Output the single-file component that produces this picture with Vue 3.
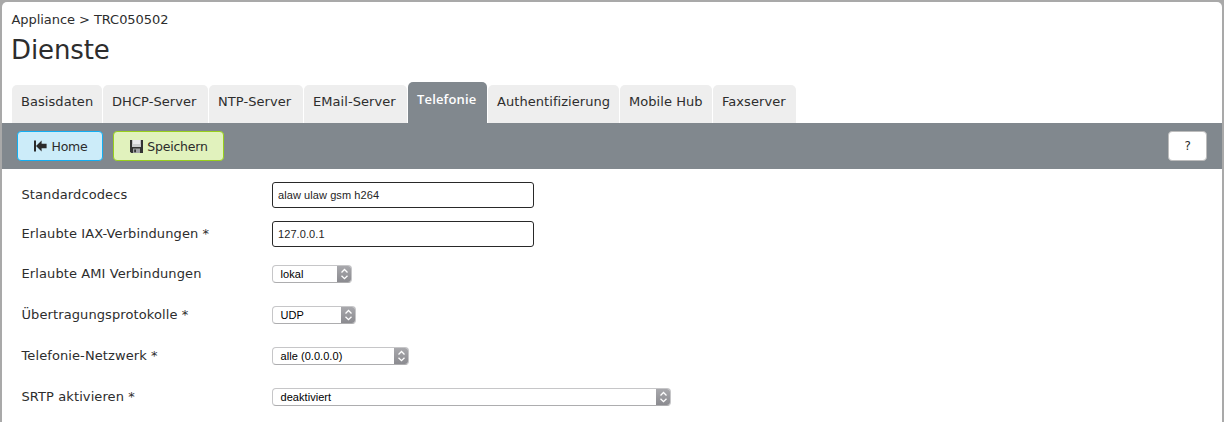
<script setup>
const tabs = [
  { name: 'Basisdaten', width: 90 },
  { name: 'DHCP-Server', width: 105 },
  { name: 'NTP-Server', width: 94 },
  { name: 'EMail-Server', width: 103 },
  { name: 'Telefonie', width: 79, active: true },
  { name: 'Authentifizierung', width: 131 },
  { name: 'Mobile Hub', width: 92 },
  { name: 'Faxserver', width: 83 },
]
const fields = [
  { label: 'Standardcodecs', type: 'input', value: 'alaw ulaw gsm h264', width: 262 },
  { label: 'Erlaubte IAX-Verbindungen *', type: 'input', value: '127.0.0.1', width: 262 },
  { label: 'Erlaubte AMI Verbindungen', type: 'select', value: 'lokal', width: 80 },
  { label: 'Übertragungsprotokolle *', type: 'select', value: 'UDP', width: 84 },
  { label: 'Telefonie-Netzwerk *', type: 'select', value: 'alle (0.0.0.0)', width: 137 },
  { label: 'SRTP aktivieren *', type: 'select', value: 'deaktiviert', width: 399 },
]
</script>

<template>
  <div class="frame">
    <main class="panel">
      <div class="crumb">Appliance &gt; TRC050502</div>
      <h1>Dienste</h1>
      <nav class="tabs">
        <a v-for="t in tabs" :key="t.name" class="tab" :class="{ active: t.active }" :style="{ width: t.width + 'px' }">{{ t.name }}</a>
      </nav>
      <div class="toolbar">
        <button class="btn home">
          <svg width="13" height="12" viewBox="0 0 13 12"><path d="M0 .5h2v11H0zM2 6l5.6-5.4v3.2H12.6v4.4H7.6v3.2z" fill="#2b2b2b" /></svg>
          <span>Home</span>
        </button>
        <button class="btn save">
          <svg width="13" height="13" viewBox="0 0 13 13">
            <path d="M0 0h13v13H1.2L0 11.8z" fill="#333" />
            <path d="M2.2 0h8.6v7H2.2z" fill="#e9e9ec" />
            <path d="M2.2 4h8.6v3H2.2z" fill="#cbcccf" />
            <path d="M3 8.6h7V13H3z" fill="#a2a3a6" />
            <path d="M4.2 9.4h1.8V12.2H4.2z" fill="#333" />
          </svg>
          <span>Speichern</span>
        </button>
        <button class="btn help">?</button>
      </div>
      <form class="form">
        <div v-for="f in fields" :key="f.label" class="row" :class="{ compact: f.type === 'input' }">
          <label>{{ f.label }}</label>
          <input v-if="f.type === 'input'" class="text" :value="f.value" :style="{ width: f.width + 'px' }" />
          <div v-else class="select" :style="{ width: f.width + 'px' }">
            <span class="value">{{ f.value }}</span>
            <span class="arrows">
              <svg width="15" height="18" viewBox="0 0 15 18"><path d="M4.5 7.5l3-3 3 3M4.5 10.7l3 3 3-3" fill="none" stroke="#fff" stroke-width="1.3" /></svg>
            </span>
          </div>
        </div>
      </form>
    </main>
  </div>
</template>

<style>
body { margin: 0; background: #aaa; overflow: hidden; }
</style>

<style scoped>
* { box-sizing: border-box; }
.frame {
  height: 422px; padding: 2px 2px 0; background: #a9a9a9; overflow: hidden;
  font-family: Verdana, "DejaVu Sans", sans-serif; font-size: 13px; color: #2d2d2d;
}
.panel { height: 440px; background: #fff; border-radius: 5px 5px 0 0; overflow: hidden; }
.crumb { height: 30px; padding: 9px 0 0 9.5px; line-height: 18px; letter-spacing: -.06px; }
h1 { margin: 0; height: 48px; padding: 2px 0 0 9px; font-size: 26px; font-weight: 400; line-height: 32px; letter-spacing: -.1px; }
.tabs { height: 43px; padding-left: 10px; display: flex; align-items: flex-end; gap: 1px; }
.tab {
  height: 38px; flex: none; border-radius: 5px 5px 0 0; background: #eee; padding-left: 9px;
  line-height: 33px; white-space: nowrap; letter-spacing: .06px;
}
.tab.active { height: 41px; background: #81888e; color: #fff; font: 600 13px/35px "Open Sans", sans-serif; letter-spacing: .15px; }
.toolbar { height: 46px; background: #81888e; display: flex; align-items: center; padding: 0 15px; }
.btn {
  height: 30px; padding: 0; border: 1px solid; border-radius: 4px; font: inherit; font-size: 12.5px; color: #2b2b2b;
  display: flex; align-items: center; justify-content: center; gap: 4px; letter-spacing: -.2px;
}
.home { width: 86px; padding-left: 2px; background: #ccecf9; border-color: #12aef2; }
.save { width: 111px; padding-left: 1px; margin-left: 10px; background: #e1f2bd; border-color: #98d01c; }
.help { width: 39px; margin-left: auto; background: #fff; border-color: #bcbcbc; font-size: 12px; }
.form { padding-top: 6px; }
.row { height: 41px; display: flex; align-items: center; padding-left: 19.5px; }
.row.compact { height: 39px; }
label { width: 250.5px; flex: none; white-space: nowrap; letter-spacing: .1px; }
.text {
  height: 26px; border: 1px solid #292929; border-radius: 3px; padding: 0 5px; margin: 0; outline: 0; background: #fff;
  font: 11px "Liberation Sans", Arial, sans-serif; letter-spacing: .08px; color: #252525;
}
.select {
  height: 18px; display: flex; justify-content: space-between; border: 1px solid #c6c6c8; border-bottom-color: #adadaf;
  border-radius: 4px; background: #fff; overflow: hidden; font: 11px/16px "Liberation Sans", Arial, sans-serif; color: #000;
}
.value { padding-left: 7.5px; letter-spacing: .05px; }
.arrows { width: 15px; height: 18px; margin: -1px -1px -1px 0; background: linear-gradient(#aaaaae, #89898e); }
.arrows svg { display: block; }
</style>
